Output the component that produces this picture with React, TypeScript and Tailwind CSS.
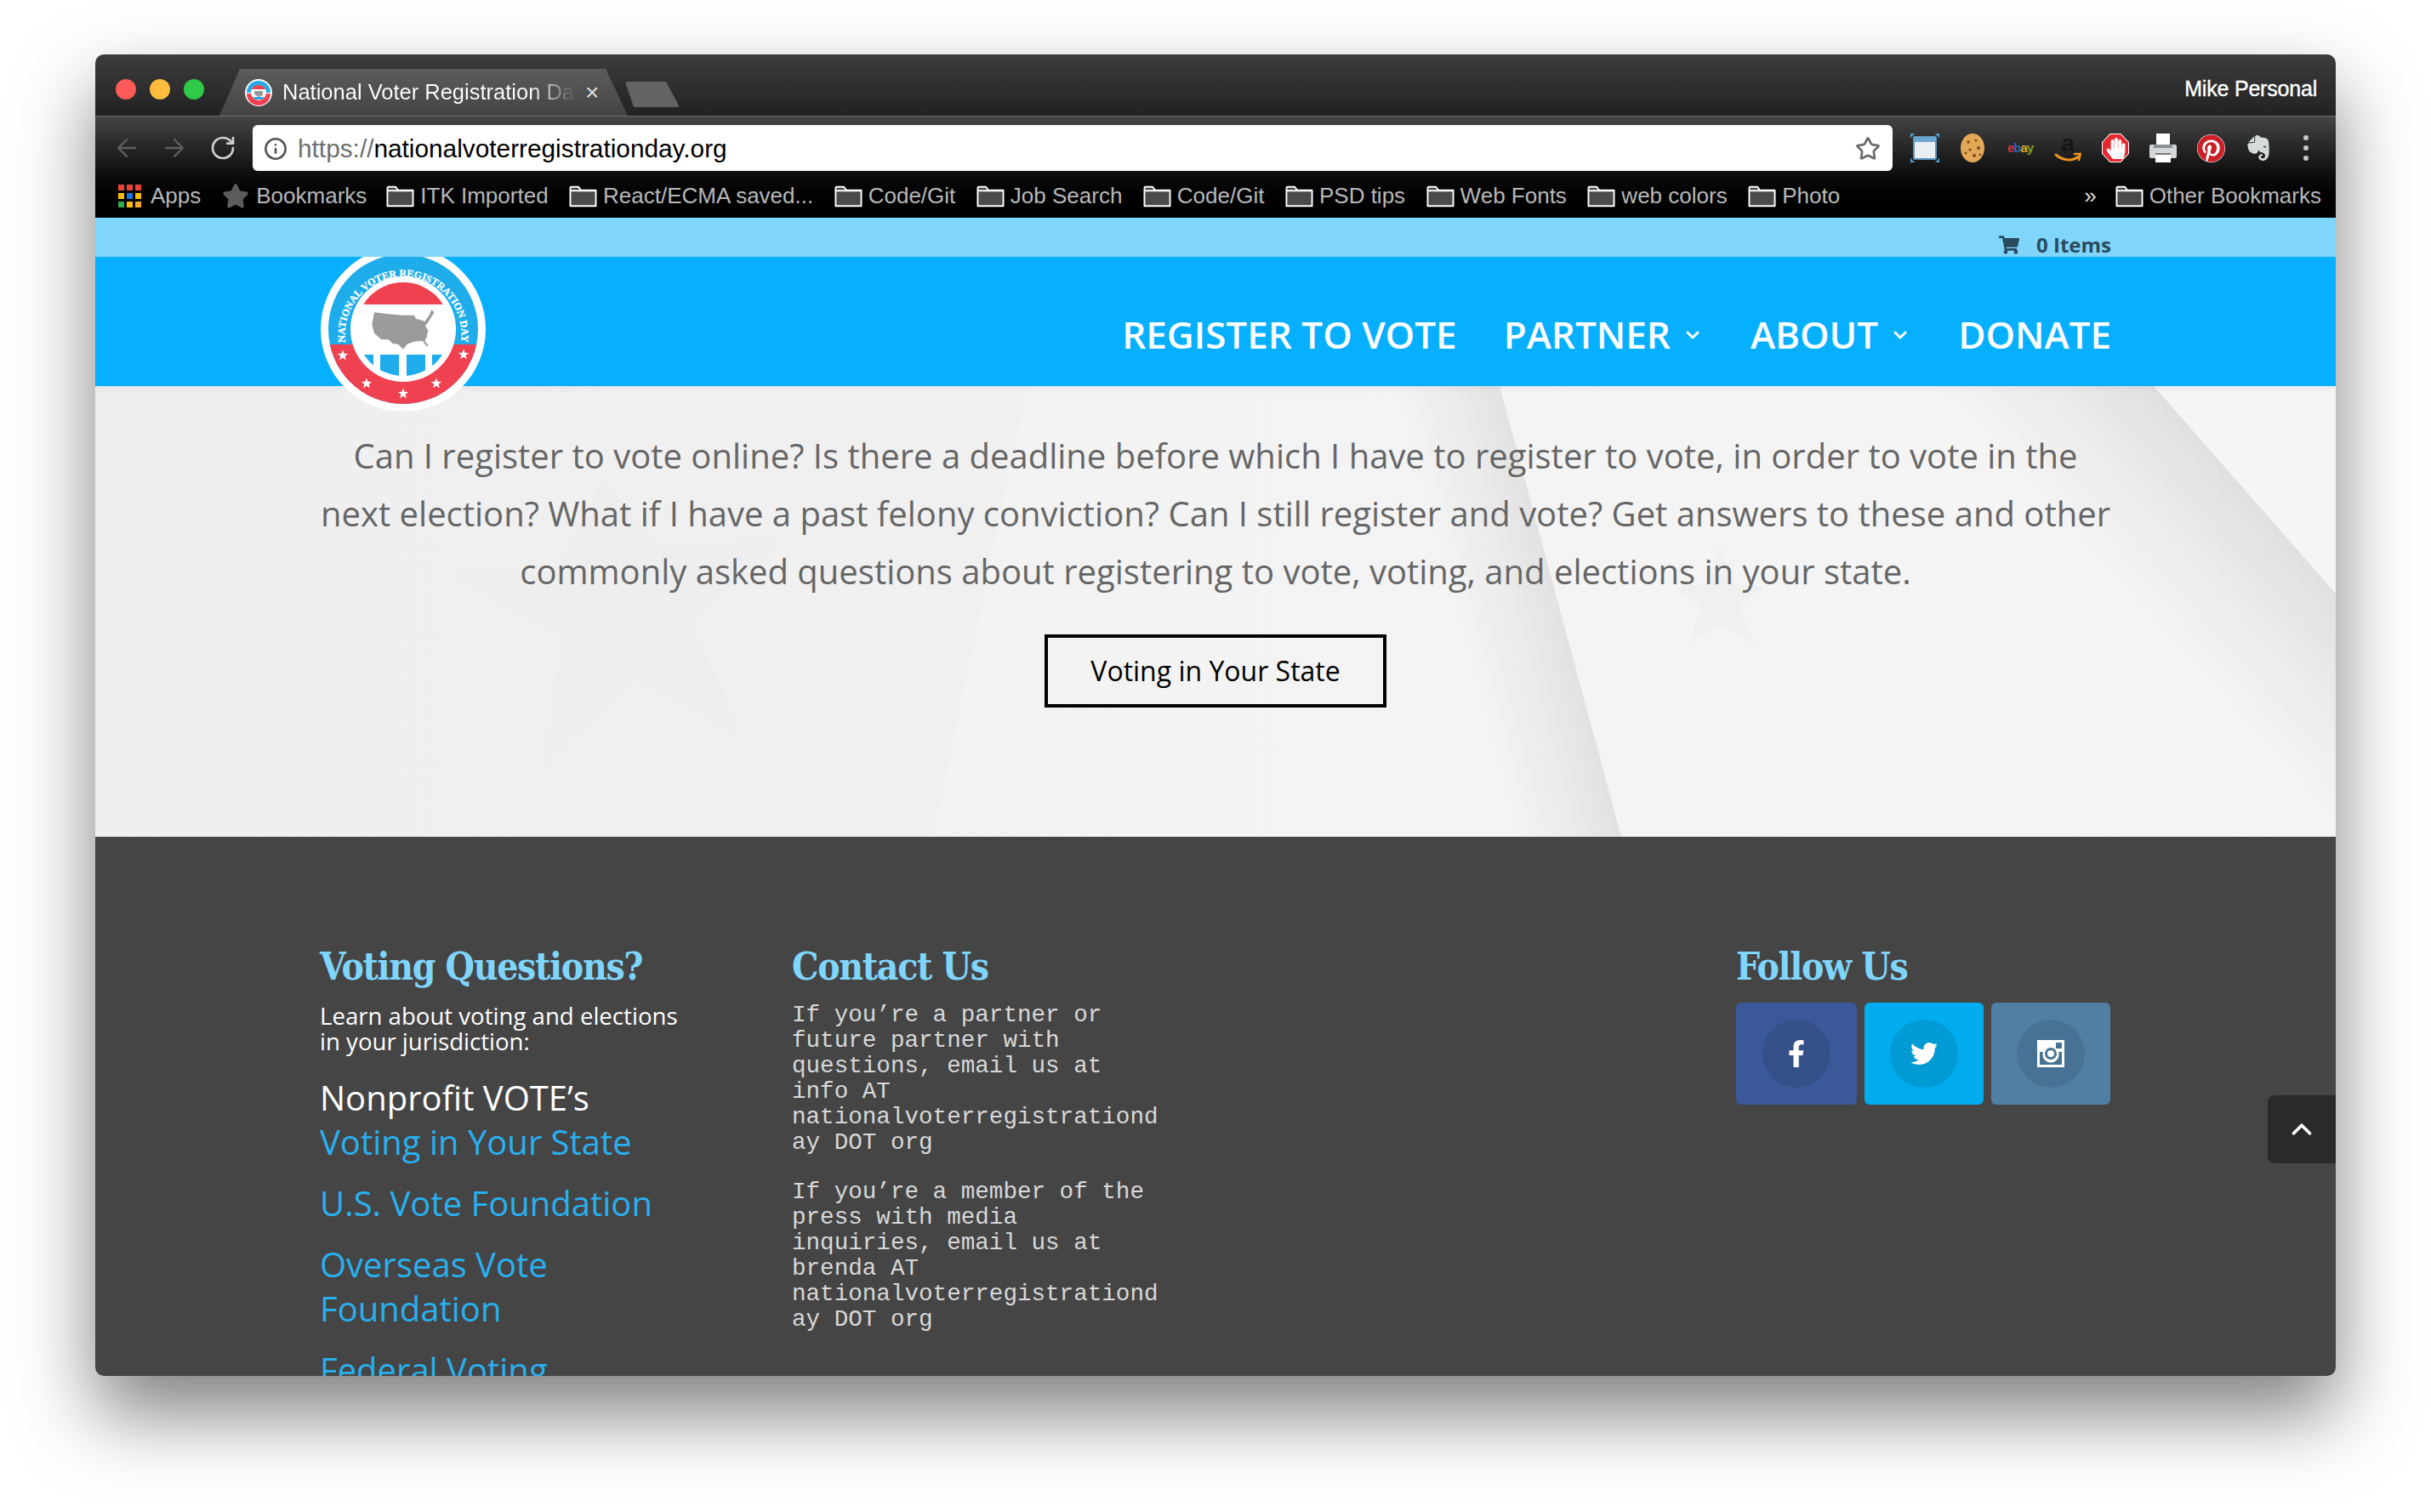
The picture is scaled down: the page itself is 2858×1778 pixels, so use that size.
import { ArrowLeft, ArrowRight, ChevronDown, ChevronUp, Info, RotateCw, Star } from 'lucide-react';
import { FaEvernote, FaFacebookF, FaHandPaper, FaPinterest, FaShoppingCart, FaTwitter } from 'react-icons/fa';

const bookmarks = ['ITK Imported', 'React/ECMA saved...', 'Code/Git', 'Job Search', 'Code/Git', 'PSD tips', 'Web Fonts', 'web colors', 'Photo'];

const appColors = ['#ea4335', '#ea4335', '#ea4335', '#fbbc05', '#1a73e8', '#fbbc05', '#34a853', '#fbbc05', '#f9a825'];

function Folder() {
  return (
    <svg width="33" height="26" viewBox="0 0 34 26" className="shrink-0">
      <path d="M1.5 24.5V2.5a1 1 0 0 1 1-1h9l3 4h18v19z" fill="#4a4a4a" stroke="#fff" strokeWidth="2" strokeLinejoin="round" />
      <path d="M1.5 6h31" stroke="#fff" strokeWidth="2" />
    </svg>
  );
}

function LogoStar({ x, y, r = 6.5 }: { x: number; y: number; r?: number }) {
  const points = Array.from({ length: 10 }, (_, i) => {
    const a = -Math.PI / 2 + (i * Math.PI) / 5;
    const radius = i % 2 === 0 ? r : r * 0.42;
    return `${x + radius * Math.cos(a)},${y + radius * Math.sin(a)}`;
  }).join(' ');
  return <polygon points={points} fill="#fff" />;
}

function Logo() {
  return (
    <svg width="194" height="181" viewBox="0 0 194 181">
      <defs>
        <clipPath id="logoBottom"><rect x="0" y="103" width="194" height="90" /></clipPath>
        <clipPath id="logoCap"><rect x="0" y="0" width="194" height="56" /></clipPath>
        <clipPath id="logoPanes"><rect x="50" y="115" width="12" height="40" /><rect x="70" y="115" width="22" height="40" /><rect x="101" y="115" width="22" height="40" /><rect x="131" y="115" width="16" height="40" /></clipPath>
        <path id="logoArc" d="M29 100 A68.5 68.5 0 1 1 165 100" />
      </defs>
      <circle cx="97" cy="85" r="97" fill="#fff" />
      <circle cx="97" cy="85" r="88" fill="#1eaceb" />
      <circle cx="97" cy="85" r="88" fill="#f04150" clipPath="url(#logoBottom)" />
      <circle cx="97" cy="85" r="62" fill="#fff" />
      <circle cx="97" cy="85" r="55" fill="#f04150" clipPath="url(#logoCap)" />
      <circle cx="97" cy="85" r="55" fill="#1eaceb" clipPath="url(#logoPanes)" />
      <g transform="translate(-37 -22) scale(0.3333)">
        <path d="M300 262L350 268L400 272L440 272L448 285L470 290L478 295L495 270L502 252L512 262L500 280L490 296L480 310L490 325L485 350L478 362L492 380L485 382L470 362L440 365L415 375L402 392L385 375L365 372L350 358L325 358L300 335L292 305Z" fill="#9b9b9b" />
      </g>
      <text fill="#fff" stroke="#fff" strokeWidth="0.3" fontSize="12" fontWeight="700" textAnchor="middle" style={{ fontFamily: '"Liberation Serif", serif' }}>
        <textPath href="#logoArc" startOffset="50%">NATIONAL VOTER REGISTRATION DAY</textPath>
      </text>
      <LogoStar x={26} y={116} />
      <LogoStar x={168} y={115} />
      <LogoStar x={54} y={149} />
      <LogoStar x={136} y={149} />
      <LogoStar x={97} y={161} />
    </svg>
  );
}

function Favicon() {
  return (
    <svg width="32" height="32" viewBox="0 0 32 32" className="shrink-0">
      <circle cx="16" cy="16" r="16" fill="#fff" />
      <path d="M16 2a14 14 0 0 1 14 14H2A14 14 0 0 1 16 2z" fill="#27a9e8" />
      <path d="M30 17a14 14 0 0 1-28 0z" fill="#ef4150" />
      <circle cx="16" cy="16" r="9" fill="#fff" />
      <path d="M8 12a9 9 0 0 1 16 0z" fill="#ef4150" />
      <path d="M11 14h10v5l-5 2-5-3z" fill="#999" />
      <path d="M9 21h14l-3 3h-8z" fill="#27a9e8" />
    </svg>
  );
}

function Cookie() {
  return (
    <svg width="30" height="36" viewBox="0 0 30 36">
      <ellipse cx="15" cy="18" rx="14" ry="17" fill="#e3a857" />
      <g fill="#7a4a1c">
        <circle cx="10" cy="11" r="1.8" /><circle cx="19" cy="9" r="1.5" /><circle cx="22" cy="18" r="2" />
        <circle cx="12" cy="20" r="1.6" /><circle cx="7" cy="24" r="1.5" /><circle cx="17" cy="27" r="2" /><circle cx="24" cy="26" r="1.3" />
      </g>
    </svg>
  );
}

function AmazonIcon() {
  return (
    <svg width="32" height="40" viewBox="0 0 32 40">
      <text x="16" y="24" textAnchor="middle" fontSize="28" fontWeight="700" fill="#161616" style={{ fontFamily: '"Liberation Sans", sans-serif' }}>a</text>
      <path d="M2 28c8 7 19 8 27 2" fill="none" stroke="#e8971f" strokeWidth="3" strokeLinecap="round" />
      <path d="M24 27l7 0-2 7" fill="none" stroke="#e8971f" strokeWidth="2.4" strokeLinecap="round" />
    </svg>
  );
}

function PrinterIcon() {
  return (
    <svg width="32" height="36" viewBox="0 0 32 36">
      <path d="M8 1h16v14H8z" fill="#fff" />
      <path d="M2 14h28a2 2 0 0 1 2 2v12a2 2 0 0 1-2 2H2a2 2 0 0 1-2-2V16a2 2 0 0 1 2-2z" fill="#d4d6da" />
      <path d="M6 14h20l2 4H4z" fill="#8c9096" />
      <path d="M7 24h18v11H7z" fill="#fff" />
      <path d="M7 24h18v2H7z" fill="#777" />
    </svg>
  );
}

function Extensions() {
  return (
    <div className="ml-[10px] flex items-center h-full">
      <div className="w-[56px] flex justify-center">
        <svg width="34" height="34" viewBox="0 0 34 34">
          <path d="M0 5V0h5M29 0h5v5M0 29v5h5M34 29v5h-5" fill="#4d9fd6" stroke="#4d9fd6" strokeWidth="1" />
          <rect x="4" y="4" width="26" height="26" rx="1" fill="#e9eef2" stroke="#5a94bd" strokeWidth="2" />
          <rect x="4" y="4" width="26" height="6" fill="#6ba4cc" />
        </svg>
      </div>
      <div className="w-[56px] flex justify-center"><Cookie /></div>
      <div className="w-[56px] flex justify-center text-[15px] tracking-[-1px] font-bold">
        <span className="text-[#d8363c]">e</span><span className="text-[#2a62b8]">b</span><span className="text-[#e0a826]">a</span><span className="text-[#7ba428]">y</span>
      </div>
      <div className="w-[56px] flex justify-center"><AmazonIcon /></div>
      <div className="w-[56px] flex justify-center">
        <div className="w-[32px] h-[34px] bg-white [clip-path:polygon(30%_0,70%_0,100%_30%,100%_70%,70%_100%,30%_100%,0_70%,0_30%)] flex items-center justify-center">
          <div className="w-[30px] h-[32px] bg-[#e5282d] [clip-path:polygon(30%_0,70%_0,100%_30%,100%_70%,70%_100%,30%_100%,0_70%,0_30%)] flex items-center justify-center">
            <FaHandPaper className="text-[25px] text-white" />
          </div>
        </div>
      </div>
      <div className="w-[56px] flex justify-center"><PrinterIcon /></div>
      <div className="w-[56px] flex justify-center"><FaPinterest className="text-[33px] text-[#cb2027] bg-white rounded-full" /></div>
      <div className="w-[56px] flex justify-center"><FaEvernote className="text-[34px] text-[#d5dbd7]" /></div>
      <div className="w-[56px] flex flex-col items-center gap-[6px]">
        <span className="w-[6px] h-[6px] rounded-full bg-[#c8c8c8]" />
        <span className="w-[6px] h-[6px] rounded-full bg-[#c8c8c8]" />
        <span className="w-[6px] h-[6px] rounded-full bg-[#c8c8c8]" />
      </div>
    </div>
  );
}

function BrowserChrome() {
  return (
    <div className="font-['Liberation_Sans',sans-serif]">
      <div className="h-[73px] flex items-end pl-[24px] pr-[22px] bg-gradient-to-b from-[#3d3d3d] to-[#222222] border-b border-[#6e6e6e]">
        <div className="h-[55px] flex items-center gap-[16px] pb-[8px]">
          <span className="w-[24px] h-[24px] rounded-full bg-[#fc5b57]" />
          <span className="w-[24px] h-[24px] rounded-full bg-[#fcbc3c]" />
          <span className="w-[24px] h-[24px] rounded-full bg-[#30c948]" />
        </div>
        <div className="ml-[18px] w-[480px] h-[55px] bg-gradient-to-b from-[#5c5c5c] to-[#444444] [clip-path:polygon(24px_0,454px_0,100%_100%,0_100%)] flex items-center pl-[30px] gap-[12px] text-white text-[25.5px] whitespace-nowrap">
          <Favicon />
          <span className="w-[346px] overflow-hidden bg-gradient-to-r from-white from-[84%] to-transparent bg-clip-text text-transparent">National Voter Registration Day</span>
          <span className="ml-[-2px] text-[#dddddd] text-[28px] font-light leading-none">×</span>
        </div>
        <div className="ml-[-3px] mb-[10px] w-[64px] h-[30px] bg-[#636363] rounded-[3px] [clip-path:polygon(0_0,48px_0,100%_100%,10px_100%)]" />
        <span className="ml-auto self-center mt-[10px] text-white text-[25px] tracking-[-0.2px] [-webkit-text-stroke:0.4px_white]">Mike Personal</span>
      </div>
      <div className="bg-gradient-to-b from-[#454545] to-black">
        <div className="h-[74px] flex items-center pl-[20px]">
          <ArrowLeft className="w-[34px] h-[34px] text-[#5f5f5f]" strokeWidth={1.6} />
          <ArrowRight className="w-[34px] h-[34px] ml-[22px] text-[#5f5f5f]" strokeWidth={1.6} />
          <RotateCw className="w-[32px] h-[32px] ml-[24px] text-[#d0d0d0]" strokeWidth={2} />
          <div className="ml-[19px] w-[1928px] h-[54px] bg-white rounded-[6px] flex items-center pt-[2px] pl-[13px] pr-[14px] text-[29.8px]">
            <Info className="w-[28px] h-[28px] text-[#555555]" strokeWidth={2.2} />
            <span className="ml-[12px] text-[#6f6f6f]">https://</span>
            <span className="text-black">nationalvoterregistrationday.org</span>
            <Star className="ml-auto w-[30px] h-[30px] text-[#6b6b6b]" strokeWidth={2.2} />
          </div>
          <Extensions />
        </div>
        <div className="h-[45px] flex items-center pl-[27px] pr-[17px] pb-[6px] text-[26px] text-[#b8b8b8] whitespace-nowrap">
          <div className="grid grid-cols-3 gap-[3px] w-[27px] shrink-0">
            {appColors.map((color, i) => (
              <span key={i} className="h-[7px]" style={{ backgroundColor: color }} />
            ))}
          </div>
          <span className="ml-[11px] mr-[25px]">Apps</span>
          <Star className="w-[32px] h-[32px] text-[#5c5c5c] fill-[#5c5c5c] shrink-0" />
          <span className="ml-[8px] mr-[23px]">Bookmarks</span>
          {bookmarks.map((label, i) => (
            <div key={i} className="flex items-center gap-[7px] mr-[24.5px]">
              <Folder />
              <span>{label}</span>
            </div>
          ))}
          <span className="ml-auto mr-[22px] text-[#dddddd]">»</span>
          <div className="flex items-center gap-[7px]">
            <Folder />
            <span>Other Bookmarks</span>
          </div>
        </div>
      </div>
    </div>
  );
}

function SiteHeader() {
  return (
    <div className="relative z-10 font-['Open_Sans',sans-serif] shadow-[0_2px_8px_rgba(0,0,0,0.06)]">
      <div className="h-[46px] bg-[#7fd5fc] flex items-center justify-end pt-[18px] pr-[264px] text-[#2a4a5e] text-[24px] leading-none font-bold">
        <FaShoppingCart className="text-[24px] mr-[20px]" />
        <span>0 Items</span>
      </div>
      <div className="h-[152px] bg-[#06b0ff] flex items-center justify-end pr-[264px] pt-[30px] text-white text-[44px] font-semibold whitespace-nowrap">
        <a>REGISTER TO VOTE</a>
        <a className="ml-[55px] flex items-center">PARTNER<ChevronDown className="ml-[14px] mt-[2px] w-[24px] h-[24px]" strokeWidth={3} /></a>
        <a className="ml-[56px] flex items-center">ABOUT<ChevronDown className="ml-[14px] mt-[2px] w-[24px] h-[24px]" strokeWidth={3} /></a>
        <a className="ml-[56px]">DONATE</a>
      </div>
      <div className="absolute left-[265px] top-[46px] z-10">
        <Logo />
      </div>
    </div>
  );
}

function HeroBackground() {
  return (
    <svg className="absolute inset-0 w-full h-full" viewBox="0 0 2634 530" preserveAspectRatio="none">
      <defs>
        <linearGradient id="bandA" gradientUnits="userSpaceOnUse" x1="1722" y1="265" x2="1606" y2="296">
          <stop offset="0" stopColor="#e2e2e2" />
          <stop offset="1" stopColor="#e6e6e6" stopOpacity="0" />
        </linearGradient>
        <linearGradient id="bandB" gradientUnits="userSpaceOnUse" x1="2527" y1="122" x2="2377" y2="254">
          <stop offset="0" stopColor="#e0e0e0" />
          <stop offset="1" stopColor="#e6e6e6" stopOpacity="0" />
        </linearGradient>
      </defs>
      <polygon points="0,0 1096,0 985,530 0,530" fill="#eeeeee" opacity="0.45" />
      <polygon points="1400,0 1651,0 1794,530 1500,530" fill="url(#bandA)" />
      <polygon points="2100,0 2420,0 2634,244 2634,530 2300,530" fill="url(#bandB)" />
      <polygon points="598,110 662,193 805,179 701,279 761,411 634,343 526,444 550,293 422,222 542,217" fill="#ebebeb" opacity="0.5" />
      <polygon points="1910,189 1925,232 1962,237 1932,258 1950,303 1910,279 1874,303 1888,258 1858,237 1895,232" fill="#ebebeb" opacity="0.5" />
    </svg>
  );
}

function Hero() {
  return (
    <div className="relative h-[530px] bg-gradient-to-r from-[#f1f1f1] to-[#f5f5f5] font-['Open_Sans',sans-serif]">
      <HeroBackground />
      <div className="relative flex flex-col items-center pt-[48px] px-[264px]">
        <p className="text-[40px] leading-[68px] text-[#666666] text-center">
          Can I register to vote online? Is there a deadline before which I have to register to vote, in order to vote in the next election? What if I have a past felony conviction? Can I still register and vote? Get answers to these and other commonly asked questions about registering to vote, voting, and elections in your state.
        </p>
        <a className="mt-[40px] w-[402px] h-[86px] border-[4px] border-black flex items-center justify-center text-[32px] text-black">
          Voting in Your State
        </a>
      </div>
    </div>
  );
}

function FooterHeading({ children }: { children: string }) {
  return (
    <h4 className="font-['DejaVu_Serif_Condensed','DejaVu_Serif',serif] font-bold text-[44px] tracking-[-1.3px] leading-[60px] text-[#7fd5fc]">{children}</h4>
  );
}

function Footer() {
  return (
    <div className="relative flex-1 min-h-0 overflow-hidden bg-[#454545] pl-[264px] pt-[120px] font-['Open_Sans',sans-serif]">
      <div className="flex">
        <div className="w-[555px] shrink-0 pt-[3px]">
          <FooterHeading>Voting Questions?</FooterHeading>
          <p className="mt-[12px] w-[440px] text-[27.6px] leading-[30px] text-white">Learn about voting and elections in your jurisdiction:</p>
          <div className="mt-[26px] w-[440px] text-[40px] leading-[52px] text-[#29b0ee]">
            <div className="text-white">Nonprofit VOTE’s</div>
            <div>Voting in Your State</div>
            <div className="mt-[20px]">U.S. Vote Foundation</div>
            <div className="mt-[20px]">Overseas Vote Foundation</div>
            <div className="mt-[20px]">Federal Voting</div>
          </div>
        </div>
        <div className="w-[1110px] shrink-0 pt-[3px]">
          <FooterHeading>Contact Us</FooterHeading>
          <div className="mt-[12px] w-[432px] [overflow-wrap:anywhere] font-['Liberation_Mono',monospace] text-[27.6px] leading-[30px] text-[#d8d8d8]">
            <p>If you’re a partner or future partner with questions, email us at info AT nationalvoterregistrationday DOT org</p>
            <p className="mt-[28px]">If you’re a member of the press with media inquiries, email us at brenda AT nationalvoterregistrationday DOT org</p>
          </div>
        </div>
        <div className="pt-[3px]">
          <FooterHeading>Follow Us</FooterHeading>
          <div className="mt-[12px] flex gap-[9px]">
            <div className="w-[142px] h-[120px] rounded-[6px] bg-[#3b5998] flex items-center justify-center">
              <span className="w-[80px] h-[80px] rounded-full bg-black/10 flex items-center justify-center"><FaFacebookF className="text-[32px] text-white" /></span>
            </div>
            <div className="w-[140px] h-[120px] rounded-[6px] bg-[#00aced] flex items-center justify-center">
              <span className="w-[80px] h-[80px] rounded-full bg-black/10 flex items-center justify-center"><FaTwitter className="text-[32px] text-white" /></span>
            </div>
            <div className="w-[140px] h-[120px] rounded-[6px] bg-[#517fa4] flex items-center justify-center">
              <span className="w-[80px] h-[80px] rounded-full bg-black/10 flex items-center justify-center">
                <svg width="32" height="32" viewBox="0 0 32 32">
                  <path fillRule="evenodd" d="M0 0h32v32H0zM22 3v7h7V3zM3 14v15h26V14h-4a9.5 9.5 0 1 1-18 0zM16 9a7 7 0 1 0 0 14 7 7 0 0 0 0-14zM16 12a4 4 0 1 1 0 8 4 4 0 0 1 0-8z" fill="#fff" />
                </svg>
              </span>
            </div>
          </div>
        </div>
      </div>
      <div className="absolute right-0 top-[304px] w-[80px] h-[80px] bg-[#2a2a2a] rounded-l-[8px] flex items-center justify-center">
        <ChevronUp className="w-[38px] h-[38px] text-white" strokeWidth={2.4} />
      </div>
    </div>
  );
}

export default function App() {
  return (
    <div className="w-[2858px] h-[1778px] bg-white pt-[64px] pl-[112px] overflow-hidden">
      <div className="w-[2634px] h-[1554px] rounded-[10px] overflow-hidden flex flex-col shadow-[0_44px_90px_rgba(0,0,0,0.5)]">
        <BrowserChrome />
        <SiteHeader />
        <Hero />
        <Footer />
      </div>
    </div>
  );
}
